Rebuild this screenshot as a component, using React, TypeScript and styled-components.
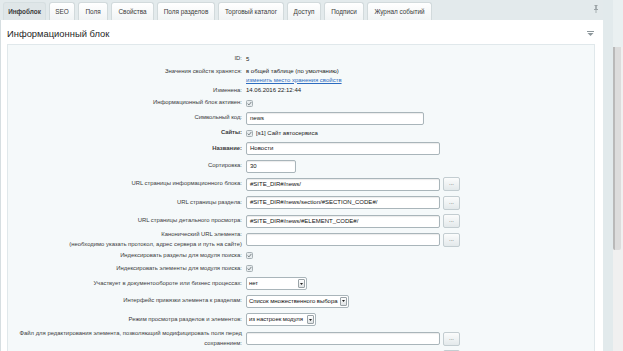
import React from 'react';
import styled, { createGlobalStyle } from 'styled-components';

const Global = createGlobalStyle`
  html, body { margin: 0; padding: 0; }
  body {
    background: #e3eaec;
    font-family: "Liberation Sans", Arial, sans-serif;
    color: #333;
    overflow: hidden;
  }
`;

const Page = styled.div`
  display: flex;
  width: 623px;
  height: 351px;
  overflow: hidden;
`;

const Main = styled.div`
  width: 603px;
  display: flex;
  flex-direction: column;
`;

const Gutter = styled.div`
  width: 10px;
  background: #e2eaec;
`;

const ScrollBar = styled.div`
  width: 10px;
  display: flex;
  flex-direction: column;
  background: #f0f0f0;
`;

const ScrollTop = styled.div`
  height: 47px;
  background: #eaf0f1;
`;

const Thumb = styled.div`
  height: 203px;
  margin-right: 2px;
  background: #dcdcdc;
  border-left: 2px solid #b9b9b9;
  border-radius: 0 0 2px 2px;
  box-sizing: border-box;
`;

const TabBar = styled.div`
  height: 20px;
  display: flex;
  align-items: flex-start;
  gap: 3px;
  padding: 2px 0 0 3px;
  box-sizing: border-box;
`;

const Tab = styled.div<{ $w: number; $active?: boolean }>`
  width: ${p => p.$w}px;
  height: 18px;
  box-sizing: border-box;
  display: flex;
  align-items: center;
  justify-content: center;
  font-size: 6.4px;
  color: #3a3a3a;
  font-weight: ${p => (p.$active ? 'bold' : 'normal')};
  border: 1px solid ${p => (p.$active ? '#d6dfe1' : '#d2dadc')};
  border-bottom: none;
  border-radius: 3px 3px 0 0;
  background: ${p => (p.$active ? '#dfe6e8' : 'linear-gradient(#ffffff, #f1f4f5)')};
  white-space: nowrap;
`;

const PinBox = styled.div`
  margin-left: auto;
  margin-right: 5px;
  margin-top: 3px;
  display: flex;
`;

const Panel = styled.section`
  flex: 1;
  background: #fff;
  border-left: 1px solid #d6dee1;
  display: flex;
  flex-direction: column;
`;

const PanelHead = styled.div`
  height: 24px;
  display: flex;
  align-items: center;
  justify-content: space-between;
  padding: 2px 9px 0 6px;
  box-sizing: border-box;
`;

const Title = styled.h2`
  margin: 0;
  font-size: 9.4px;
  font-weight: normal;
  color: #1f1f1f;
`;

const ContentBox = styled.div`
  flex: 1;
  margin: 0 8px 0 6px;
  border: 1px solid #e0e8eb;
  border-bottom: none;
  background: #f5f9fa;
  padding-top: 8px;
`;

const Row = styled.div<{ $h: number; $top?: boolean }>`
  height: ${p => p.$h}px;
  display: grid;
  grid-template-columns: 234px 1fr;
  column-gap: 4px;
  align-items: ${p => (p.$top ? 'start' : 'center')};
  padding-top: ${p => (p.$top ? 2 : 0)}px;
  box-sizing: border-box;
`;

const Label = styled.div<{ $bold?: boolean }>`
  text-align: right;
  font-size: 5.9px;
  line-height: 9.5px;
  color: #3a3a3a;
  font-weight: ${p => (p.$bold ? 'bold' : 'normal')};
`;

const Value = styled.div`
  display: flex;
  align-items: center;
  gap: 3px;
  font-size: 6px;
  line-height: 8.5px;
  color: #222;
`;

const Stack = styled.div`
  display: flex;
  flex-direction: column;
`;

const Link = styled.a`
  color: #2d6cc0;
  text-decoration: underline;
`;

const Input = styled.div<{ $w: number }>`
  width: ${p => p.$w}px;
  height: 13px;
  box-sizing: border-box;
  border: 1px solid #a9b5ba;
  border-radius: 2px;
  background: #fff;
  box-shadow: inset 0 1px 1px rgba(0, 0, 0, 0.08);
  display: flex;
  align-items: center;
  padding: 0 3px;
  font-size: 6px;
  color: #111;
  white-space: nowrap;
  overflow: hidden;
`;

const DotsButton = styled.div`
  width: 17px;
  height: 14px;
  box-sizing: border-box;
  border: 1px solid #c3cdd1;
  border-radius: 2px;
  background: linear-gradient(#fbfcfc, #e3e9eb);
  display: flex;
  align-items: center;
  justify-content: center;
  font-size: 6px;
  color: #555;
  line-height: 1;
  padding-bottom: 2px;
`;

const Select = styled.div<{ $w: number }>`
  width: ${p => p.$w}px;
  height: 13px;
  box-sizing: border-box;
  border: 1px solid #a9b5ba;
  border-radius: 2px;
  background: #fff;
  display: flex;
  align-items: stretch;
  font-size: 6px;
  color: #111;
  white-space: nowrap;
`;

const SelectText = styled.span`
  flex: 1;
  display: flex;
  align-items: center;
  padding-left: 2px;
  padding-right: 1px;
  letter-spacing: -0.05px;
`;

const SelectArrow = styled.span`
  width: 7px;
  flex: none;
  margin: 1px;
  box-sizing: border-box;
  border: 1px solid #9aa3a7;
  border-radius: 1px;
  background: linear-gradient(#ffffff, #dfe3e4);
  display: flex;
  align-items: center;
  justify-content: center;
`;

const Check = styled.span`
  width: 7px;
  height: 7px;
  box-sizing: border-box;
  border: 1px solid #a7b1b5;
  border-radius: 1.5px;
  background: #e7ecee;
  display: flex;
  align-items: center;
  justify-content: center;
`;

const CheckBox = () => (
  <Check>
    <svg width="5" height="5" viewBox="0 0 5 5">
      <path d="M0.6 2.6 L2 3.9 L4.4 0.9" fill="none" stroke="#6d767a" strokeWidth="0.9" />
    </svg>
  </Check>
);

const Arrow = () => (
  <svg width="3" height="2" viewBox="0 0 3 2">
    <path d="M0 0 H3 L1.5 2 Z" fill="#222" />
  </svg>
);

const Pin = () => (
  <svg width="4" height="8" viewBox="0 0 4 8">
    <rect x="0.5" y="0" width="3" height="1" fill="#9aa2a5" />
    <rect x="1" y="1" width="2" height="3" fill="#a8b0b3" />
    <rect x="0" y="4" width="4" height="1" fill="#9aa2a5" />
    <rect x="1.6" y="5" width="0.8" height="3" fill="#9aa2a5" />
  </svg>
);

const Collapse = () => (
  <svg width="7" height="5" viewBox="0 0 7 5">
    <rect x="0" y="0" width="7" height="1" fill="#8d979b" />
    <path d="M0.5 2 H6.5 L3.5 5 Z" fill="#8d979b" />
  </svg>
);

const tabs: [string, number][] = [
  ['Инфоблок', 43],
  ['SEO', 26],
  ['Поля', 30],
  ['Свойства', 43],
  ['Поля разделов', 58],
  ['Торговый каталог', 66],
  ['Доступ', 34],
  ['Подписи', 40],
  ['Журнал событий', 65],
];

export default function App() {
  return (
    <>
      <Global />
      <Page>
        <Main>
          <TabBar>
            {tabs.map(([t, w], i) => (
              <Tab key={t} $w={w} $active={i === 0}>
                {t}
              </Tab>
            ))}
            <PinBox>
              <Pin />
            </PinBox>
          </TabBar>
          <Panel>
            <PanelHead>
              <Title>Информационный блок</Title>
              <Collapse />
            </PanelHead>
            <ContentBox>
              <Row $h={12}>
                <Label>ID:</Label>
                <Value>5</Value>
              </Row>
              <Row $h={20} $top>
                <Label>Значения свойств хранятся:</Label>
                <Value>
                  <Stack>
                    <span>в общей таблице (по умолчанию)</span>
                    <Link>изменить место хранения свойств</Link>
                  </Stack>
                </Value>
              </Row>
              <Row $h={11}>
                <Label>Изменена:</Label>
                <Value>14.06.2016 22:12:44</Value>
              </Row>
              <Row $h={14}>
                <Label>Информационный блок активен:</Label>
                <Value>
                  <CheckBox />
                </Value>
              </Row>
              <Row $h={16}>
                <Label>Символьный код:</Label>
                <Value>
                  <Input $w={178}>news</Input>
                </Value>
              </Row>
              <Row $h={14}>
                <Label $bold>Сайты:</Label>
                <Value>
                  <CheckBox />
                  <span>[s1] Сайт автосервиса</span>
                </Value>
              </Row>
              <Row $h={17}>
                <Label $bold>Название:</Label>
                <Value>
                  <Input $w={194}>Новости</Input>
                </Value>
              </Row>
              <Row $h={18}>
                <Label>Сортировка:</Label>
                <Value>
                  <Input $w={50}>30</Input>
                </Value>
              </Row>
              <Row $h={18}>
                <Label>URL страницы информационного блока:</Label>
                <Value>
                  <Input $w={194}>#SITE_DIR#/news/</Input>
                  <DotsButton>...</DotsButton>
                </Value>
              </Row>
              <Row $h={19}>
                <Label>URL страницы раздела:</Label>
                <Value>
                  <Input $w={194}>#SITE_DIR#/news/section/#SECTION_CODE#/</Input>
                  <DotsButton>...</DotsButton>
                </Value>
              </Row>
              <Row $h={18}>
                <Label>URL страницы детального просмотра:</Label>
                <Value>
                  <Input $w={194}>#SITE_DIR#/news/#ELEMENT_CODE#/</Input>
                  <DotsButton>...</DotsButton>
                </Value>
              </Row>
              <Row $h={19}>
                <Label>
                  Канонический URL элемента:
                  <br />
                  (необходимо указать протокол, адрес сервера и путь на сайте)
                </Label>
                <Value>
                  <Input $w={194} />
                  <DotsButton>...</DotsButton>
                </Value>
              </Row>
              <Row $h={13}>
                <Label>Индексировать разделы для модуля поиска:</Label>
                <Value>
                  <CheckBox />
                </Value>
              </Row>
              <Row $h={13}>
                <Label>Индексировать элементы для модуля поиска:</Label>
                <Value>
                  <CheckBox />
                </Value>
              </Row>
              <Row $h={17}>
                <Label>Участвует в документообороте или бизнес процессах:</Label>
                <Value>
                  <Select $w={61}>
                    <SelectText>нет</SelectText>
                    <SelectArrow>
                      <Arrow />
                    </SelectArrow>
                  </Select>
                </Value>
              </Row>
              <Row $h={18}>
                <Label>Интерфейс привязки элемента к разделам:</Label>
                <Value>
                  <Select $w={103}>
                    <SelectText>Список множественного выбора</SelectText>
                    <SelectArrow>
                      <Arrow />
                    </SelectArrow>
                  </Select>
                </Value>
              </Row>
              <Row $h={19}>
                <Label>Режим просмотра разделов и элементов:</Label>
                <Value>
                  <Select $w={70}>
                    <SelectText>из настроек модуля</SelectText>
                    <SelectArrow>
                      <Arrow />
                    </SelectArrow>
                  </Select>
                </Value>
              </Row>
              <Row $h={18}>
                <Label>
                  Файл для редактирования элемента, позволяющий модифицировать поля перед
                  <br />
                  сохранением:
                </Label>
                <Value>
                  <Input $w={194} />
                  <DotsButton>...</DotsButton>
                </Value>
              </Row>
              <Row $h={20}>
                <Label />
                <Value>
                  <Input $w={194} />
                  <DotsButton />
                </Value>
              </Row>
            </ContentBox>
          </Panel>
        </Main>
        <Gutter />
        <ScrollBar>
          <ScrollTop />
          <Thumb />
        </ScrollBar>
      </Page>
    </>
  );
}
